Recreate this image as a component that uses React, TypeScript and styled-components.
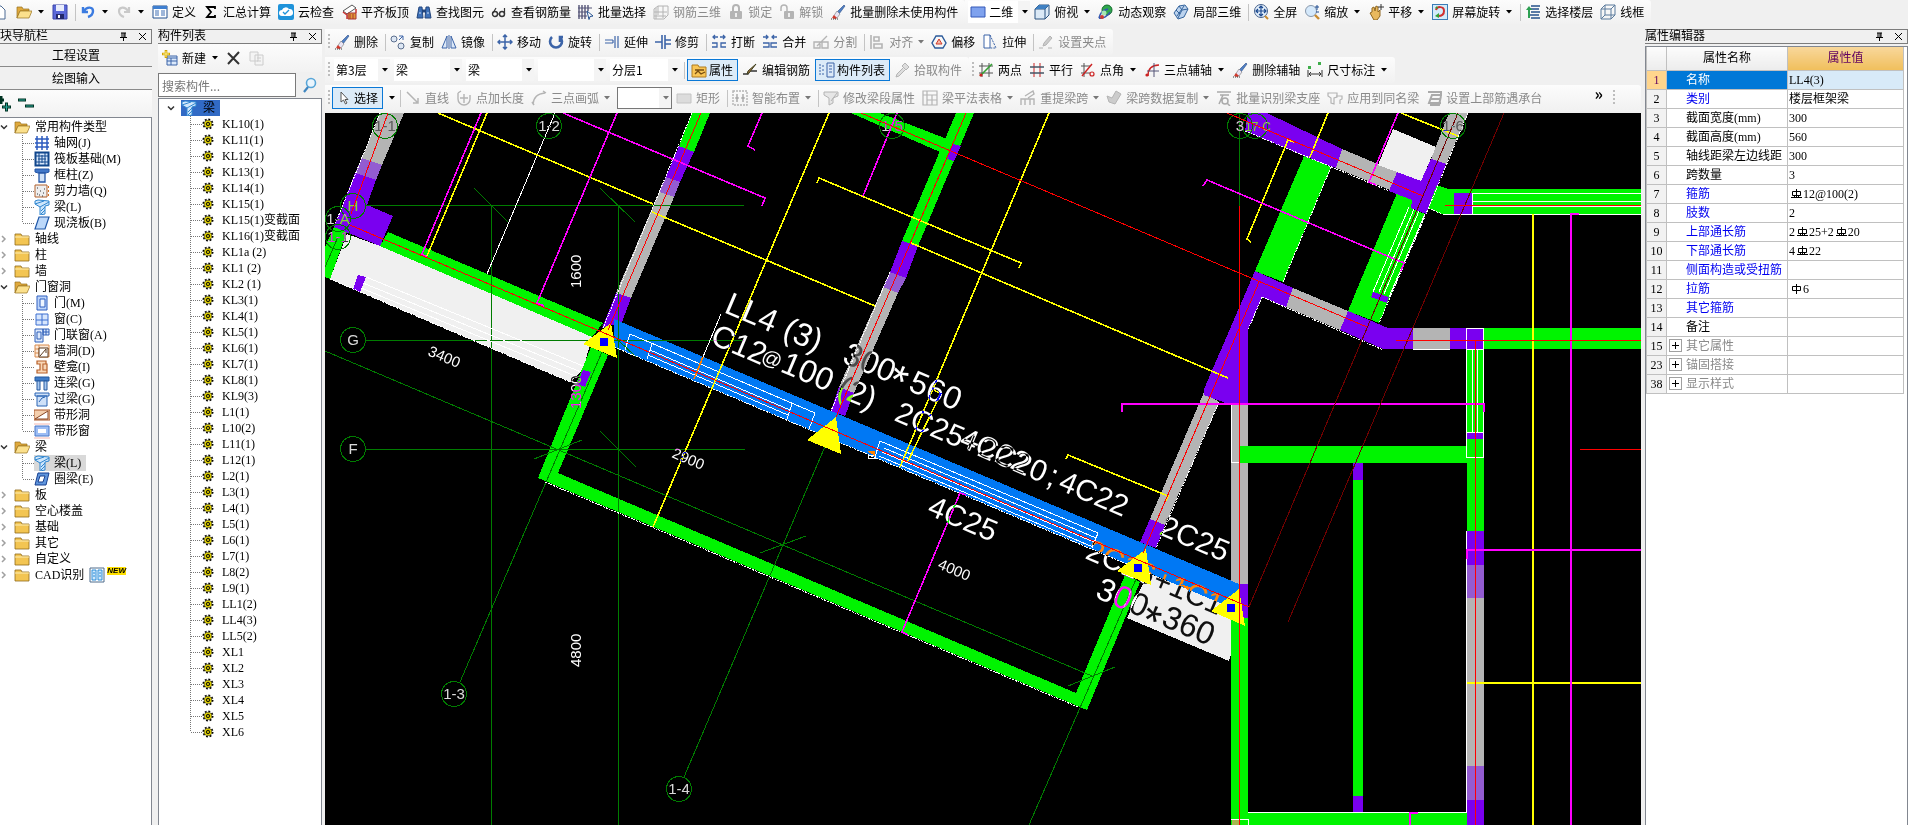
import React, { Fragment, ReactNode } from "react";
import styled, { createGlobalStyle, css } from "styled-components";

const UI = '"Noto Sans CJK SC", "Liberation Sans", sans-serif';
const SONG = '"Liberation Serif", "Noto Sans CJK SC", serif';

const Global = createGlobalStyle`
  * { box-sizing: border-box; }
  body { margin: 0; background: #f0f0f0; color: #000; font: 12px/16px ${UI}; }
  button, input, select { font: inherit; color: inherit; }
  ul { list-style: none; margin: 0; padding: 0; }
  h2 { margin: 0; font: inherit; }
  svg { display: block; flex: none; }
`;

/* ---------- page frame ---------- */
const Page = styled.div`
  display: flex;
  flex-direction: column;
  height: 100vh;
  min-height: 760px;
  overflow: hidden;
`;
const Body = styled.div`
  display: flex;
  flex: 1;
  min-height: 0;
`;
const Center = styled.main`
  display: flex;
  flex-direction: column;
  flex: 1;
  min-width: 0;
  margin: 0 4px 0 3px;
`;
const Canvas = styled.div`
  flex: 1;
  min-height: 0;
  background: #000;
  overflow: hidden;
`;

/* ---------- toolbars ---------- */
const BarRow = styled.div<{ $top?: boolean }>`
  display: flex;
  flex: none;
  height: ${(p) => (p.$top ? 29 : 28)}px;
  padding-bottom: ${(p) => (p.$top ? 5 : 2)}px;
  overflow: hidden;
`;
const Strip = styled.div<{ $grow?: boolean; $lead?: number }>`
  display: flex;
  align-items: center;
  flex: ${(p) => (p.$grow ? "1 0 auto" : "none")};
  padding: 0 0 0 ${(p) => p.$lead ?? 3}px;
  border-radius: 0 3px 3px 0;
  background: linear-gradient(#fcfcfc, #f1f1f1);
  white-space: nowrap;
`;
const Grip = styled.span`
  width: 2px;
  height: 16px;
  margin-right: 4px;
  background: repeating-linear-gradient(#bdbdbd 0 2px, transparent 2px 4px);
`;
const Split = styled.span`
  width: 1px;
  height: 17px;
  margin: 0 4px 0 0;
  background: #c4c4c4;
`;
const ToolButton = styled.button<{ $off?: boolean; $on?: boolean; $tight?: boolean }>`
  display: flex;
  align-items: center;
  gap: 4px;
  height: 22px;
  margin: 0 ${(p) => (p.$tight ? 0 : 7)}px 0 0;
  padding: 0;
  border: 0;
  background: none;
  white-space: nowrap;
  color: ${(p) => (p.$off ? "#8a8a8a" : "#000")};
  ${(p) =>
    p.$on &&
    css`
      gap: 2px;
      margin: 0 4px 0 -2px;
      padding: 0 4px 0 3px;
      border: 1px solid #0a78d6;
      background: #dcebf8;
    `}
`;
const MenuButton = styled.button`
  margin: 0 4px 0 0;
  padding: 0;
  border: 0;
  background: none;
`;
const Combo = styled.label<{ $w: number; $boxed?: boolean }>`
  display: flex;
  align-items: center;
  width: ${(p) => p.$w}px;
  height: 22px;
  margin-right: 4px;
  padding-left: 2px;
  background: #fff;
  border: ${(p) => (p.$boxed ? "1px solid #777" : "0")};
`;
const ComboSelect = styled.select<{ $inset?: boolean }>`
  appearance: none;
  flex: 1;
  min-width: 0;
  padding: 0 0 0 ${(p) => (p.$inset ? 3 : 0)}px;
  border: 0;
  background: none;
`;
const ComboArrow = styled.span`
  display: flex;
  align-items: center;
  justify-content: center;
  align-self: stretch;
  width: 12px;
  background: #f4f4f4;
`;
const More = styled.button`
  margin: 0 10px 0 auto;
  padding: 0;
  border: 0;
  background: none;
  font: 700 16px/16px ${UI};
  align-self: flex-start;
`;
const EmptyTool = styled.span`
  width: 22px;
`;

const Caret = ({ off }: { off?: boolean }) => (
  <svg width={off ? 7 : 9} height="6" viewBox={off ? "1 0 7 6" : "0 0 9 6"} aria-hidden="true">
    <path d="M2 1h6L5 4.5z" fill={off ? "#777" : "#000"} />
  </svg>
);

/* ---------- icon drawings, 16 x 16 ---------- */
const B = "#3c64a8";
const G = "#b4b4b4";
const st = (c: string, w = 1) => ({ fill: "none", stroke: c, strokeWidth: w });

const brush = (
  <>
    <path d="M14 1l1 1-6 8-2-2z" fill="#4f7fc4" stroke="#2b4d86" strokeWidth=".6" />
    <path d="M7 7l3 3-3 4-4-1z" fill="#e8e4f4" stroke="#777" strokeWidth=".6" />
    <path d="M4 11l3 3-2 1-3-1z" fill="#d2392c" />
    <path d="M1 15h7" stroke="#333" strokeDasharray="1 1" />
  </>
);
const beam = (
  <>
    <path d="M1 2l3-1 11 1v4l-4 1v8l-5 1V8L1 5z" fill="#cfe6fb" stroke="#2f86d0" />
    <path d="M1 5l9-3M6 8l9-5M7 12l4-4M7 15l4-4" stroke="#2f86d0" />
  </>
);
const openFolder = (
  <>
    <path d="M1 3h5l1 2h6v2H4l-3 7z" fill="#e0a93c" stroke="#96701c" strokeWidth=".7" />
    <path d="M4 7h12l-3 7H1z" fill="#fbe08c" stroke="#96701c" strokeWidth=".7" />
  </>
);

const icons: Record<string, ReactNode> = {
  page: <path d="M-8 2h9l4 4v9H-8z" fill="#fff" stroke="#4c6a94" />,
  open: openFolder,
  save: (
    <>
      <path d="M1 1h14v14H1z" fill="#5a68d8" stroke="#3a44a8" />
      <path d="M4 1h8v6H4z" fill="#e8ecfb" />
      <path d="M4 10h8v5H4z" fill="#23286a" />
      <path d="M6 11h2v3H6z" fill="#fff" />
    </>
  ),
  undo: <path d="M3 3v5h5M4 7c3-5 9-4 9 0 0 3-2 5-5 6" {...st("#3b7be0", 2.4)} />,
  redo: <path d="M13 3v5H8M12 7C9 2 3 3 3 7c0 3 2 5 5 6" {...st("#c9c9c9", 2.2)} />,
  define: (
    <>
      <path d="M1 2h14v12H1z" fill="#fff" stroke="#23508f" />
      <path d="M1 2h14v3H1z" fill="#3f7fd0" />
      <path d="M3 7h4M3 9h4M3 11h4M9 7h4M9 9h4M9 11h4" stroke="#3f6fb4" />
    </>
  ),
  sigma: <path d="M12 5V3H4l4 5-4 5h8v-2" {...st("#000", 1.8)} />,
  cloud: (
    <>
      <rect width="16" height="16" rx="2" fill="#1f93da" />
      <path d="M4 12a3 3 0 010-6 4 4 0 017-1 3.5 3.5 0 011 7z" fill="#fff" />
      <path d="M5 8l2 2 4-4" {...st("#1f93da", 1.3)} />
    </>
  ),
  slab: (
    <>
      <path d="M2 7l9-6 4 3-9 6z" fill="#fff" stroke="#555" />
      <path d="M2 8l4 3v4M15 5v4" {...st("#c33", 1.5)} />
      <path d="M7 9h8v6H7z" fill="#e09a36" stroke="#a33" />
      <path d="M9 10v5M12 10v5" stroke="#a33" />
    </>
  ),
  find: (
    <>
      <path d="M3 3h3l1 11H1zM10 3h3l2 11H9z" fill="#3d70b8" stroke="#23457c" />
      <path d="M6 7h4" stroke="#23457c" strokeWidth="3" />
      <path d="M3 9h2M11 9h2" stroke="#cfe0f8" />
    </>
  ),
  glasses: (
    <>
      <circle cx="4" cy="10" r="2.500" {...st("#333", 1.4)} />
      <circle cx="11" cy="10" r="2.500" {...st("#333", 1.4)} />
      <path d="M2 9l3-5M13.500 10V4M7 10h2" {...st("#333", 1.2)} />
    </>
  ),
  batch: (
    <>
      <path d="M1 1v14M4 1v14M7 1v14M10 1v6" stroke="#557" strokeWidth="1.4" />
      <path d="M0 4h14M0 8h9M0 12h9" stroke="#557" />
      <path d="M9 7l6 5-3 .5-1 3z" fill="#fff" stroke="#23508f" />
    </>
  ),
  rebar3d: <path d="M1 5l4-3h10v9l-4 4H1zM5 2v9M10 2v12M1 8h13M1 12h12M3 4v11" {...st(G)} />,
  lock: (
    <>
      <path d="M5 7V4a3 3 0 016 0v3" {...st(G, 2)} />
      <rect x="2" y="7" width="12" height="8" rx="1" fill={G} />
      <path d="M8 9v4" stroke="#eee" strokeWidth="2" />
    </>
  ),
  unlock: (
    <>
      <path d="M2 7V4a3 3 0 016 0v3" {...st(G, 1.5)} />
      <rect x="5" y="7" width="10" height="8" rx="1" fill={G} />
      <path d="M10 9v4" stroke="#eee" strokeWidth="2" />
    </>
  ),
  brush,
  plane: <path d="M1 3h14v10H1z" fill="#7fa2ee" stroke="#3558b8" />,
  cube: (
    <>
      <path d="M1 5l4-4h10v10l-4 4H1z" fill="#dbe9f6" stroke="#2b5380" />
      <path d="M1 5h10v10M11 5l4-4" {...st("#2b5380")} />
      <path d="M1 5l4-4h10l-4 4z" fill="#3f80c2" />
    </>
  ),
  orbit: (
    <>
      <ellipse cx="9" cy="6" rx="5" ry="5" fill="#2fa84e" stroke="#156b2c" />
      <path d="M1 14c1-5 5-8 9-9M1 14c4 1 9-2 11-6" {...st("#3557b0", 1.6)} />
      <circle cx="6" cy="9" r="2.5" fill="#a6e6b2" />
      <circle cx="4" cy="13" r="2" fill="#cc3a33" />
    </>
  ),
  local3d: (
    <>
      <path d="M1 9l5-7 6-1 3 4-4 8-6 2z" fill="#bcd3ee" stroke="#33639c" />
      <path d="M6 2l3 4 6-1M9 6l-4 8M3 6l4 4M4 12l7-10" {...st("#33639c")} />
    </>
  ),
  full: (
    <>
      <circle cx="8" cy="7" r="6.5" fill="#e4f0fc" stroke="#44618c" />
      <path d="M8 2v10M3 7h10M6 4l2-2 2 2M6 10l2 2 2-2M5 5L3 7l2 2M11 5l2 2-2 2" {...st("#1d4a90", 1.2)} />
      <path d="M12 12l3 3" stroke="#c98b2f" strokeWidth="2" />
    </>
  ),
  zoom: (
    <>
      <circle cx="7" cy="7" r="5.5" fill="#d5e9fb" stroke="#8898ac" />
      <path d="M11 11l4 4" stroke="#c98b2f" strokeWidth="2.4" />
      <path d="M13 1v5M11 3h4M12 8h3" stroke="#1d4a90" />
    </>
  ),
  pan: (
    <>
      <path d="M2 9l2-1V4l2-1 1 4 1-5 2 1v5l2-2v6l-3 4H6z" fill="#e9b95e" stroke="#8f6720" />
      <path d="M13 0v6M10 3h6" stroke="#333" />
    </>
  ),
  spin: (
    <>
      <rect x=".5" y=".5" width="15" height="15" fill="#d3ecfb" stroke="#3b7cb6" />
      <path d="M4 6c1-4 8-4 8 1 0 4-3 5-6 5" {...st("#d03030", 2)} />
      <path d="M3 12l4-3v5z" fill="#35a035" />
      <path d="M3 4l2-2 1 3" fill="#35a035" />
    </>
  ),
  floors: (
    <>
      <path d="M6 2h9M5 5h9M6 8h9M5 11h9M6 14h9" stroke="#24508a" strokeWidth="1.6" />
      <path d="M1 6l3-4 3 4H5v8H3V6z" fill="#2da052" />
    </>
  ),
  wire: <path d="M1 5l4-4h10v10l-4 4H1zM1 5h10v10M11 5l4-4M5 1v10l-4 4M5 11h10" {...st("#5b7a9c")} />,
  copy: (
    <>
      <circle cx="4" cy="5" r="3" fill="#dde7f4" stroke="#5c6f8e" />
      <circle cx="11" cy="12" r="3" fill="#dde7f4" stroke="#5c6f8e" />
      <path d="M9 2h4v4M9 6l4-4" {...st(B)} />
    </>
  ),
  mirror: (
    <>
      <path d="M1 14L6 2v12zM15 14L10 2v12z" fill="#dce8f7" stroke={B} />
      <path d="M8 1v14" stroke={B} />
    </>
  ),
  move: <path d="M8 1v14M1 8h14M6 3l2-2 2 2M6 13l2 2 2-2M3 6L1 8l2 2M13 6l2 2-2 2" {...st(B, 1.5)} />,
  rotate: <path d="M4 3a6 6 0 108 0M12 8V3h3" {...st(B, 2.6)} />,
  extend: <path d="M1 6h8M1 9h8M11 2v12M14 2v12M9 6v3" {...st(B, 1.2)} />,
  trim: <path d="M7 1v14M10 1v14M0 8h7M10 6h6M10 10h6" {...st(B, 1.6)} />,
  cut: <path d="M2 3h5M9 3h5M4 1L2 3l2 2M12 1l2 2-2 2M1 9h5v4H1M15 9h-5v4h5" {...st(B, 1.3)} />,
  join: <path d="M1 3h5M10 3h5M4 1l2 2-2 2M12 1l-2 2 2 2M1 9h6v4H1M15 9H9v4h6" {...st(B, 1.3)} />,
  divide: <path d="M1 8h6v6H1zM9 8h6v6H9zM4 12L14 2" {...st(G, 1.4)} />,
  align: <path d="M2 1v14M5 3h5v4H5zM5 10h8v4H5z" {...st(G, 1.6)} />,
  offset: (
    <>
      <path d="M5 2h6l4 7-3 5H4L1 9z" {...st("#2b5a9a", 1.4)} />
      <path d="M8 5l3 5H5z" fill="#f5b8a8" stroke="#d03a2a" />
    </>
  ),
  stretch: (
    <>
      <path d="M2 1h6v13H2z" fill="#fff" stroke={B} />
      <path d="M8 1l6 13H8" fill="none" stroke={B} strokeDasharray="2 1" />
    </>
  ),
  clamp: <path d="M12 2l2 2-6 7-3 1 1-3zM1 14h4M10 14h4" fill="#ccc" stroke={G} />,
  attr: (
    <>
      <path d="M1 3h6l1 2h7v10H1z" fill="#f9c656" stroke="#b07d20" />
      <path d="M4 8h9M4 12l3-3 3 3 4-2" {...st("#774e10", 1.3)} />
    </>
  ),
  editBar: (
    <>
      <path d="M1 12h5l2-3h7" {...st("#333", 1.3)} />
      <path d="M14 2l-7 9-2 1 1-3z" fill="#9a6d3a" stroke="#442" />
    </>
  ),
  listBtn: (
    <>
      <path d="M1 2v12M3 4h2M3 8h2M3 12h2" stroke={B} strokeDasharray="2 1" />
      <path d="M8 1h7v14H8z" fill="#dce9f8" stroke={B} />
      <path d="M10 4h3M10 7h3M10 10h3" stroke={B} />
    </>
  ),
  pick: <path d="M11 1l4 4-3 3-4-4zM9 6l-6 6-1 3 3-1 6-6" fill="#ddd" stroke={G} />,
  twoPt: (
    <>
      <path d="M4 1v14M11 1v14M1 4h14M1 11h14" stroke="#555" />
      <path d="M2 14L14 2" stroke="#35a035" strokeWidth="1.6" />
      <circle cx="3" cy="13" r="1.6" fill="#c22" />
    </>
  ),
  parallel: (
    <>
      <path d="M5 1v14M11 1v14" stroke="#c22" />
      <path d="M1 5h14M1 11h14" stroke="#456" strokeWidth="1.4" />
    </>
  ),
  angle: (
    <>
      <path d="M4 1v14M1 4h9M1 11h9" stroke="#555" />
      <path d="M2 14L12 2" stroke="#c22" strokeWidth="1.4" />
      <circle cx="12" cy="12" r="2" {...st("#c22", 1.2)} />
    </>
  ),
  arcAxis: (
    <>
      <path d="M15 3C8 3 4 7 4 14" {...st("#c22", 1.4)} />
      <path d="M10 1v14M3 9h12" stroke="#557" />
      <circle cx="3" cy="13" r="1.6" fill="#c22" />
    </>
  ),
  dim: (
    <>
      <path d="M1 8v7M15 8v7M2 12h12M4 10l-2 2 2 2M12 10l2 2-2 2" {...st("#333")} />
      <path d="M1 4h3v3H1zM11 0h3v3h-3z" fill="#3fae4b" />
    </>
  ),
  pointer: <path d="M5 2v10l2.500-2 2 4 1.500-1-2-3.500h3z" fill="#fff" stroke="#555" />,
  line: <path d="M2 2l11 11M13 8v5H8" {...st(G, 1.5)} />,
  plusArc: <path d="M2 3v6a6 6 0 0012 0V5M8 4v9M4 8h8M2 3l3-2" {...st(G, 1.4)} />,
  arc3: <path d="M2 14C3 7 6 4 14 3M1 12l2 3M12 1l3 2" {...st(G, 1.5)} />,
  rect: <path d="M1 4h14v9H1z" fill="#dcdcdc" stroke="#c4c4c4" />,
  smart: (
    <>
      <path d="M1 1h14v14H1z" fill="none" stroke={G} strokeWidth="1.4" strokeDasharray="2 1" />
      <path d="M5 4v8M11 4v8M3 8h4M9 8h4" {...st("#999", 1.2)} />
    </>
  ),
  modify: <path d="M1 2h14v4l-5 2v5l-4 2V8L1 5zM8 11l6-8" fill="#e6e6e6" stroke={G} />,
  table: <path d="M1 1h14v14H1zM1 5h14M5 1v14M5 10h10M10 5v10" {...st(G, 1.2)} />,
  span: <path d="M1 15V9h13v6M5 9v6M10 9v6M5 6l8-5 1 3-6 4" {...st(G, 1.4)} />,
  paint: <path d="M10 1l5 3-6 10-6-2-2-6 5 2z" fill="#ccc" stroke={G} />,
  detect: <path d="M1 2h14M4 5h9M7 5l-4 9M9 8a3 3 0 100 6 3 3 0 000-6zM11 13l3 3" {...st("#aaa", 1.5)} />,
  apply: <path d="M1 3h9v4L7 8v6l-3-1V8L1 6zM9 6h6v3l-2 1v4" {...st(G, 1.2)} />,
  cap: <path d="M2 2h13v3H6l-3 8h12M5 9h9M4 15h9l2-9" {...st("#aaa", 2)} />,
  create: (
    <>
      <path d="M5 6h10v9H5z" fill="#dbe9fb" stroke={B} />
      <path d="M5 8h10M9 8v7M5 11h10" stroke={B} />
      <path d="M4 0v8M0 4h8" stroke="#d3a300" strokeWidth="2.6" />
      <path d="M4 1v6M1 4h6" stroke="#fff08a" />
    </>
  ),
  cross: <path d="M2 3l11 11M13 2L2 14" {...st("#333", 2)} />,
  paste: <path d="M1 2h8v9H1zM6 5h8v10H6zM8 8h4M8 11h4" fill="#f4f4f4" stroke="#ccc" />,
  search: (
    <>
      <circle cx="9" cy="6" r="4.500" fill="#eaf5fd" stroke="#58a6d8" strokeWidth="1.6" />
      <path d="M6 10l-4 5" stroke="#3f86c0" strokeWidth="2.2" />
    </>
  ),
  folder: (
    <>
      <path d="M1 3h6l1 2h7v9H1z" fill="#f3c552" stroke="#8f6a1a" strokeWidth=".8" />
      <path d="M1 6h14" stroke="#fdeeb4" />
    </>
  ),
  folderOpen: openFolder,
  grid: <path d="M3 1v14M8 1v14M13 1v14M1 4h14M1 8h14M1 12h14" {...st("#2c5bc0", 1.5)} />,
  raft: (
    <>
      <path d="M1.500 1.500h13v13h-13z" fill="#d6e6fa" stroke="#10468c" strokeWidth="2" />
      <path d="M5 2v12M8 4v8M11 2v12M2 5h12M4 8h8M2 11h12" stroke="#10468c" />
    </>
  ),
  column: (
    <>
      <path d="M1 2h14v3l-3 1H4L1 5z" fill="#3f76c8" stroke="#2456a6" />
      <path d="M5 6h6v9H5z" fill="#cfe1f8" stroke="#2456a6" strokeWidth="1.300" />
    </>
  ),
  wall: (
    <>
      <path d="M1 2h12v12H1z" fill="#eee" stroke="#b0602c" />
      <path d="M3 11h1M6 8h1M5 12h1M9 10h1M8 13h1M10 6h1M3 5h1" stroke="#333" />
      <path d="M14 4h1M14 8h1M14 12h1" stroke="#d07024" strokeWidth="2" />
    </>
  ),
  beam,
  floorSlab: <path d="M5 2h10l-4 12H1z" fill="#bcd8fa" stroke="#1d56a8" strokeWidth="1.2" />,
  door: (
    <>
      <path d="M3 1h10v14H3z" fill="#bcd4fa" stroke="#2f5fc0" />
      <path d="M6 4h5v8H6z" fill="#eef5ff" stroke="#2f5fc0" />
    </>
  ),
  window: (
    <>
      <path d="M2 3h12v11H2z" fill="#d7e6fd" stroke="#3c6fd0" />
      <path d="M8 3v11M2 9h12" stroke="#3c6fd0" />
    </>
  ),
  doorWin: <path d="M1 2h8v13H1zM3 5h4v7H3zM9 2h6v6H9zM12 2v6M9 5h6" fill="#dbe8fc" stroke="#2f5fb8" />,
  hole: (
    <>
      <path d="M1 2h14v12H1zM1 6h14M1 10h14M5 2v12" fill="#fbeadb" stroke="#d88a4c" />
      <path d="M5 5h9v9H5zM6 13l6-7M12 6v4" fill="#fff" stroke="#5a3a20" />
    </>
  ),
  niche: <path d="M3 2h9v3H9v6h4v3H3v-3h3V5H3zM10 5h3v6h-3" fill="#f8d6b6" stroke="#b8602a" strokeWidth="1.2" />,
  linkBeam: (
    <>
      <path d="M1 2h14v4H1z" fill="#3f7cc8" stroke="#24589e" />
      <path d="M3 6h3v9H3zM10 6h3v9h-3z" fill="#a8c8f0" stroke="#24589e" />
    </>
  ),
  overBeam: <path d="M1 2h14v3H1zM3 5h10v10H3zM5 11l3-4 3-1" fill="#cfe1f8" stroke="#2a65b4" />,
  stripHole: (
    <>
      <path d="M0 3h16v10H0z" fill="#f4cfae" stroke="#a8562a" />
      <path d="M1 12l13-8v8z" fill="#fff" stroke="#884422" />
    </>
  ),
  stripWin: (
    <>
      <path d="M0 1h16M0 15h16" stroke="#f6b8b0" />
      <path d="M1 3h14v10H1z" fill="#9dbdf4" stroke="#4a78c8" />
      <path d="M4 6h8v4H4z" fill="#fff" />
    </>
  ),
  ringBeam: (
    <>
      <path d="M4 2h11l-3 12H1z" fill="#5f95dc" stroke="#173f90" />
      <path d="M6 5h5l-2 6H4z" fill="#fff" stroke="#173f90" />
    </>
  ),
  doc: (
    <>
      <path d="M1 1h14v14H1z" fill="#fff" stroke="#4e6d8c" />
      <path d="M3 3h4v10H3zM9 3h4v10H9z" fill="#cfe8fb" stroke="#2b8cd8" />
      <path d="M4 6h2M4 9h2M10 6h2M10 9h2" stroke="#2b8cd8" />
    </>
  ),
};

const Icon = ({ name, size = 16 }: { name: string; size?: number }) => (
  <svg width={size} height={size} viewBox="0 0 16 16" aria-hidden="true">
    {icons[name]}
  </svg>
);

type ToolSpec = { i: string; t?: string; off?: boolean; on?: boolean; menu?: boolean; tight?: boolean; name?: string };
const Tool = ({ i, t, off, on, menu, tight, name }: ToolSpec) => (
  <ToolButton type="button" $off={off} $on={on} $tight={tight} aria-label={t ?? name}>
    <Icon name={i} />
    {t}
    {menu && <Caret off={off} />}
  </ToolButton>
);
const Tools = ({ items }: { items: (ToolSpec | "|")[] }) => (
  <>{items.map((s, n) => (s === "|" ? <Split key={n} /> : <Tool key={n} {...s} />))}</>
);
const Picker = ({ w, value, name, boxed, icon }: { w: number; value: string; name: string; boxed?: boolean; icon?: string }) => (
  <Combo $w={w} $boxed={boxed}>
    {icon && <Icon name={icon} />}
    <ComboSelect $inset={!!icon} aria-label={name} defaultValue={value}>
      <option value={value}>{value}</option>
    </ComboSelect>
    <ComboArrow>
      <Caret off={boxed} />
    </ComboArrow>
  </Combo>
);

/* ---------- docked panels ---------- */
const Panel = styled.section<{ $w: number; $gap?: number }>`
  display: flex;
  flex-direction: column;
  flex: none;
  width: ${(p) => p.$w}px;
  margin-right: ${(p) => p.$gap ?? 0}px;
  min-height: 0;
  font-family: ${SONG};
`;
const PanelHead = styled.header`
  display: flex;
  align-items: center;
  gap: 10px;
  height: 15px;
  flex: none;
  padding-right: 4px;
  border: 1px solid #7c7c7c;
  border-left: 0;
  line-height: 13px;
`;
const PanelTitle = styled.h2`
  flex: 1;
`;
const HeadButton = styled.button`
  padding: 0;
  border: 0;
  background: none;
`;
const Title = ({ children }: { children: string }) => (
  <PanelHead>
    <PanelTitle>{children}</PanelTitle>
    <HeadButton type="button" aria-label="固定">
      <svg width="9" height="9" viewBox="0 0 9 9">
        <path d="M2 1h5M3 1v4M6 1v4M5 1v4M1 5.500h7M4.500 6v3" {...st("#000")} />
      </svg>
    </HeadButton>
    <HeadButton type="button" aria-label="关闭">
      <svg width="9" height="9" viewBox="0 0 9 9">
        <path d="M1 1l7 7M8 1L1 8" {...st("#000")} />
      </svg>
    </HeadButton>
  </PanelHead>
);
const NavButton = styled.button`
  flex: none;
  height: 22px;
  margin-top: 1px;
  padding: 0;
  border: 0;
  border-bottom: 1px solid #8a8a8a;
  background: #f0f0f0;
  text-align: center;
`;
const PanelTools = styled.div<{ $h: number }>`
  display: flex;
  align-items: center;
  flex: none;
  height: ${(p) => p.$h}px;
  background: linear-gradient(#fcfcfc, #f2f2f2);
  font-family: ${UI};
`;
const ListTools = styled(PanelTools)`
  padding: 0 0 0 4px;
`;
const SearchRow = styled.div`
  display: flex;
  flex: none;
  height: 26px;
  align-items: center;
  gap: 6px;
`;
const SearchBox = styled.input`
  width: 138px;
  height: 24px;
  padding: 0 3px;
  border: 1px solid #7a7a7a;
  background: #fff;
  font-family: ${UI};
  &::placeholder { color: #777; opacity: 1; }
`;
const TreeBox = styled.div<{ $left?: boolean }>`
  flex: 1;
  min-height: 0;
  padding-top: 1px;
  overflow: hidden;
  background: #fff;
  border: 1px solid #828790;
  border-bottom: 0;
  border-left-width: ${(p) => (p.$left ? 1 : 0)}px;
`;
const Row = styled.div<{ $pad?: number }>`
  display: flex;
  align-items: center;
  height: 16px;
  padding-left: ${(p) => p.$pad ?? 0}px;
  white-space: pre;
`;
const RowText = styled.span<{ $gap?: number }>`
  padding-left: ${(p) => p.$gap ?? 5}px;
`;
const Picked = styled.span<{ $bg: string }>`
  display: flex;
  align-items: center;
  height: 16px;
  padding: 0 5px 0 0;
  background: ${(p) => p.$bg};
`;
const NewTag = styled.span`
  align-self: flex-start;
  margin-left: 2px;
  background: #ffe000;
  font: italic 700 8px/8px "Liberation Sans", sans-serif;
`;

const Chevron = ({ open }: { open?: boolean }) => (
  <svg width="8" height="8" viewBox="0 0 8 8" aria-hidden="true">
    <path d={open ? "M1 2.500l3 3 3-3" : "M2 1l3 3-3 3"} {...st(open ? "#333" : "#a0a0a0", 1.5)} />
  </svg>
);
const Branch = ({ last }: { last?: boolean }) => (
  <svg width="12" height="16" viewBox="0 0 12 16" aria-hidden="true">
    <path d={`M.5 0v${last ? 8 : 16}M1 8.500h11`} stroke="#777" strokeDasharray="1 1" fill="none" />
  </svg>
);
const Gear = () => (
  <svg width="12" height="12" viewBox="0 0 12 12" aria-hidden="true">
    <circle cx="6" cy="6" r="4.500" fill="none" stroke="#000" strokeWidth="2" strokeDasharray="1.800 1.700" />
    <circle cx="6" cy="6" r="3.800" fill="#ffee00" stroke="#333" strokeWidth=".6" />
    <path d="M6 2.500v7M2.500 6h7M3.500 3.500l5 5M8.500 3.500l-5 5" stroke="#6a6200" strokeWidth=".6" />
    <circle cx="6" cy="6" r="1.500" fill="#ffee00" stroke="#000" />
  </svg>
);

type Node = { t: string; kids?: [string, string][]; sel?: number; tag?: boolean };
const nav: Node[] = [
  {
    t: "常用构件类型",
    kids: [["grid", "轴网(J)"], ["raft", "筏板基础(M)"], ["column", "框柱(Z)"], ["wall", "剪力墙(Q)"], ["beam", "梁(L)"], ["floorSlab", "现浇板(B)"]],
  },
  { t: "轴线" },
  { t: "柱" },
  { t: "墙" },
  {
    t: "门窗洞",
    kids: [["door", "门(M)"], ["window", "窗(C)"], ["doorWin", "门联窗(A)"], ["hole", "墙洞(D)"], ["niche", "壁龛(I)"], ["linkBeam", "连梁(G)"], ["overBeam", "过梁(G)"], ["stripHole", "带形洞"], ["stripWin", "带形窗"]],
  },
  { t: "梁", sel: 0, kids: [["beam", "梁(L)"], ["ringBeam", "圈梁(E)"]] },
  { t: "板" },
  { t: "空心楼盖" },
  { t: "基础" },
  { t: "其它" },
  { t: "自定义" },
  { t: "CAD识别", tag: true },
];
const parts = (
  "KL10(1),KL11(1),KL12(1),KL13(1),KL14(1),KL15(1),KL15(1)变截面,KL16(1)变截面,KL1a (2),KL1 (2),KL2 (1)," +
  "KL3(1),KL4(1),KL5(1),KL6(1),KL7(1),KL8(1),KL9(3),L1(1),L10(2),L11(1),L12(1),L2(1),L3(1),L4(1),L5(1)," +
  "L6(1),L7(1),L8(2),L9(1),LL1(2),LL4(3),LL5(2),XL1,XL2,XL3,XL4,XL5,XL6"
).split(",");

const NavPanel = () => (
  <Panel $w={152} $gap={6} aria-label="模块导航栏">
    <Title>块导航栏</Title>
    <NavButton type="button">工程设置</NavButton>
    <NavButton type="button">绘图输入</NavButton>
    <PanelTools $h={27}>
      <svg width="34" height="16" viewBox="0 0 34 16" aria-hidden="true">
        <path d="M-3 4h7M1 0v8M2 11h9M6.500 6.500v9M18 4h8M25 10h9" stroke="#032" strokeWidth="3" />
        <path d="M3 11h7M6.500 7.500v7M19 4h6M26 10h7" stroke="#2aa89a" />
      </svg>
    </PanelTools>
    <TreeBox>
      <ul>
        {nav.map((n) => (
          <li key={n.t}>
            <Row>
              <Chevron open={!!n.kids} />
              <Row $pad={6}>
                <Icon name={n.kids ? "folderOpen" : "folder"} />
                <RowText>{n.t}</RowText>
              </Row>
              {n.tag && (
                <Row $pad={5}>
                  <Icon name="doc" />
                  <NewTag>NEW</NewTag>
                </Row>
              )}
            </Row>
            {n.kids && (
              <ul>
                {n.kids.map(([icon, label], k) => (
                  <li key={label}>
                    <Row $pad={22}>
                      <Branch last={k === n.kids!.length - 1} />
                      <Picked $bg={n.sel === k ? "#d9d9d9" : "transparent"}>
                        <Icon name={icon} />
                        <RowText $gap={4}>{label}</RowText>
                      </Picked>
                    </Row>
                  </li>
                ))}
              </ul>
            )}
          </li>
        ))}
      </ul>
    </TreeBox>
  </Panel>
);

const PartPanel = () => (
  <Panel $w={164} aria-label="构件列表">
    <Title>构件列表</Title>
    <ListTools $h={28}>
      <Tool i="create" t="新建" menu />
      <Tool i="cross" name="删除构件" />
      <Tool i="paste" name="复制构件" off />
    </ListTools>
    <SearchRow>
      <SearchBox aria-label="搜索构件" placeholder="搜索构件..." />
      <Icon name="search" />
    </SearchRow>
    <TreeBox $left>
      <Row $pad={8}>
        <Chevron open />
        <Row $pad={6}>
          <Picked $bg="#316ac5">
            <Icon name="beam" />
            <RowText $gap={6}>梁</RowText>
          </Picked>
        </Row>
      </Row>
      <ul>
        {parts.map((p, k) => (
          <li key={p}>
            <Row $pad={31}>
              <Branch last={k === parts.length - 1} />
              <Gear />
              <RowText $gap={8}>{p}</RowText>
            </Row>
          </li>
        ))}
      </ul>
    </TreeBox>
  </Panel>
);

/* ---------- property grid ---------- */
const GridBox = styled.div`
  flex: 1;
  min-height: 0;
  margin-top: 2px;
  padding: 0 3px 0 0;
  border: 1px solid #828790;
  border-bottom: 0;
  background: #fff;
`;
const Grid = styled.table`
  width: 100%;
  table-layout: fixed;
  border-collapse: collapse;
`;
const Col = styled.col<{ $w?: number }>`
  width: ${(p) => (p.$w ? `${p.$w}px` : "auto")};
`;
const Th = styled.th<{ $hot?: boolean }>`
  height: 23px;
  padding: 0;
  border: 1px solid #c0c0c0;
  border-top: 0;
  font-weight: 400;
  color: ${(p) => (p.$hot ? "#600060" : "#000")};
  background: ${(p) => (p.$hot ? "linear-gradient(#f8d79b, #f0bf5c)" : "linear-gradient(#fcfcfc, #ececec)")};
`;
const Num = styled.td<{ $hot?: boolean }>`
  height: 19px;
  padding: 0;
  border: 1px solid #c0c0c0;
  text-align: center;
  color: ${(p) => (p.$hot ? "#600060" : "#000")};
  background: ${(p) => (p.$hot ? "#ffd58d" : "#f2f2f2")};
`;
const NameCell = styled.td<{ $tone?: string; $hot?: boolean }>`
  height: 19px;
  padding: 0 0 0 2px;
  border: 1px solid #c0c0c0;
  white-space: nowrap;
  overflow: hidden;
  color: ${(p) => (p.$hot ? "#fff" : p.$tone)};
  background: ${(p) => (p.$hot ? "#0078d7" : "#fff")};
`;
const NameInner = styled.span`
  display: grid;
  grid-template-columns: 17px 1fr;
  align-items: center;
  line-height: 16px;
`;
const ValueCell = styled.td<{ $hot?: boolean }>`
  height: 19px;
  padding: 0 0 0 1px;
  border: 1px solid #c0c0c0;
  background: ${(p) => (p.$hot ? "#d8eaf8" : "#fff")};
`;
const ValueInner = styled.span`
  display: flex;
  align-items: center;
  line-height: 16px;
`;
const Expand = styled.button`
  width: 13px;
  height: 13px;
  padding: 1px;
  border: 1px solid #a0a0a0;
  background: #fff;
`;

const Steel = ({ grade }: { grade: number }) => (
  <svg width="14" height="10" viewBox="0 0 14 10" role="img" aria-label={grade === 3 ? "三级钢" : "一级钢"}>
    <path
      d={grade === 3 ? "M3.500 2.500h8v4h-8zM7.500 0v9M2 8.500h11M5.500 6v2.500M9.500 6v2.500" : "M3.500 2.500h8v4h-8zM7.500 0v10"}
      {...st("#000")}
    />
  </svg>
);
const BLUE = "#0000f0";
const GREY = "#8a8a8a";
const props: [number, string, string, (string | number)[]][] = [
  [1, "名称", BLUE, ["LL4(3)"]],
  [2, "类别", BLUE, ["楼层框架梁"]],
  [3, "截面宽度(mm)", "#000", ["300"]],
  [4, "截面高度(mm)", "#000", ["560"]],
  [5, "轴线距梁左边线距", "#000", ["300"]],
  [6, "跨数量", "#000", ["3"]],
  [7, "箍筋", BLUE, [3, "12@100(2)"]],
  [8, "肢数", BLUE, ["2"]],
  [9, "上部通长筋", BLUE, ["2", 3, "25+2", 3, "20"]],
  [10, "下部通长筋", BLUE, ["4", 3, "22"]],
  [11, "侧面构造或受扭筋", BLUE, []],
  [12, "拉筋", BLUE, [1, "6"]],
  [13, "其它箍筋", BLUE, []],
  [14, "备注", "#000", []],
  [15, "其它属性", GREY, []],
  [23, "锚固搭接", GREY, []],
  [38, "显示样式", GREY, []],
];

const PropertyPanel = () => (
  <Panel $w={263} aria-label="属性编辑器">
    <Title>属性编辑器</Title>
    <GridBox>
      <Grid>
        <colgroup>
          <Col $w={20} />
          <Col $w={121} />
          <Col />
        </colgroup>
        <thead>
          <tr>
            <Th aria-label="序号" />
            <Th>属性名称</Th>
            <Th $hot>属性值</Th>
          </tr>
        </thead>
        <tbody>
          {props.map(([n, name, tone, value]) => (
            <tr key={n}>
              <Num $hot={n === 1}>{n}</Num>
              <NameCell $tone={tone} $hot={n === 1}>
                <NameInner>
                  <span>
                    {n > 14 && (
                      <Expand type="button" aria-label={`展开${name}`}>
                        <svg width="9" height="9" viewBox="0 0 9 9">
                          <path d="M1 4.500h7M4.500 1v7" stroke="#000" />
                        </svg>
                      </Expand>
                    )}
                  </span>
                  <span>{name}</span>
                </NameInner>
              </NameCell>
              <ValueCell $hot={n === 1}>
                <ValueInner>
                  {value.map((v, k) => (typeof v === "number" ? <Steel key={k} grade={v} /> : <Fragment key={k}>{v}</Fragment>))}
                </ValueInner>
              </ValueCell>
            </tr>
          ))}
        </tbody>
      </Grid>
    </GridBox>
  </Panel>
);

/* ---------- structural plan ---------- */
const GREEN = "#00f400";
const PURPLE = "#7a00f0";
const LILAC = "#935cd1";
const CONC = "#b4b4b4";
const WHITE = "#f0f0f0";
const DARK = "#007c00";
const YEL = "#ffff00";
const MAG = "#ff00ff";
const MAROON = "#700000";

const Drawing = styled.svg`
  width: 100%;
  height: 100%;
`;
const Notes = styled.g`
  font-family: "Liberation Sans", sans-serif;
  fill: #fff;
  mix-blend-mode: difference;
`;

const walls: [string, string][] = [
  [WHITE, "347,234 380,246 592,337 583,370 570,382 330,279"],
  [CONC, "380,113 404,113 382,165 362,158"],
  [LILAC, "362,158 382,165 376,180 355,173"],
  [GREEN, "388,232 603,323 592,337 380,246"],
  [GREEN, "334,227 347,232 330,279 325,277 325,247"],
  [PURPLE, "355,173 376,180 367,205 393,216 380,246 334,227"],
  [PURPLE, "358,275 366,277 360,292 353,289"],
  [GREEN, "692,113 710,113 694,152 679,146"],
  [PURPLE, "679,146 694,152 680,182 666,177"],
  [LILAC, "666,177 680,182 674,197 659,192"],
  [CONC, "659,192 674,197 631,298 616,293"],
  [PURPLE, "616,293 631,298 622,322 602,328"],
  [GREEN, "591,347 538,478 1087,710 1140,582 1125,575 1076,693 558,473 608,355"],
  [PURPLE, "583,370 591,372 585,387 577,384"],
  [GREEN, "851,113 880,113 947,139 940,152"],
  [GREEN, "956,113 974,113 918,246 902,241"],
  [PURPLE, "953,144 961,146 954,161 947,159"],
  [PURPLE, "902,241 918,246 906,278 890,272"],
  [LILAC, "890,272 906,278 898,293 883,287"],
  [CONC, "883,287 898,293 854,393 839,387"],
  [PURPLE, "839,387 854,393 845,416 831,411"],
  [CONC, "1204,392 1219,402 1165,525 1150,519"],
  [PURPLE, "1150,519 1165,525 1156,548 1140,542"],
  [WHITE, "1148,573 1231,607 1231,655 1229,661 1127,618"],
  [CONC, "1231,405 1248,405 1248,584 1231,584"],
  [PURPLE, "1231,584 1248,584 1248,618 1231,618"],
  [GREEN, "1231,618 1248,618 1248,825 1231,825"],
  ["#0078f4", "614,319 1239,584 1239,611 1220,603 614,347"],
  [GREEN, "1304,156 1331,167 1283,282 1255,271"],
  [GREEN, "1397,193 1412,200 1411,208 1425,214 1379,323 1348,311"],
  [PURPLE, "1373,292 1389,297 1387,303 1371,297"],
  [PURPLE, "1255,271 1293,288 1286,307 1262,297 1248,330 1248,405 1231,405 1204,395 1204,389"],
  [CONC, "1293,288 1348,311 1340,330 1286,307"],
  [PURPLE, "1348,311 1388,328 1413,328 1413,349 1383,349 1340,330"],
  [CONC, "1413,328 1450,328 1450,349 1413,349"],
  [PURPLE, "1450,328 1484,328 1484,349 1450,349"],
  [GREEN, "1484,328 1641,328 1641,349 1484,349"],
  [PURPLE, "1248,113 1267,113 1342,149 1336,168 1304,156 1245,131"],
  [CONC, "1342,149 1397,172 1390,190 1336,168"],
  [WHITE, "1393,129 1436,147 1421,181 1397,172 1378,165"],
  [CONC, "1449,113 1468,113 1446,164 1431,159"],
  [PURPLE, "1397,172 1421,181 1431,159 1446,164 1426,214 1411,208 1412,200 1389,191"],
  [GREEN, "1437,185 1448,189 1641,189 1641,214 1442,214 1428,208"],
  [PURPLE, "1454,193 1472,193 1472,214 1454,214"],
  [GREEN, "1240,446 1467,446 1467,463 1240,463"],
  [CONC, "1231,463 1240,463 1240,446 1231,446"],
  [GREEN, "1467,349 1484,349 1484,531 1467,531"],
  [PURPLE, "1467,433 1484,433 1484,439 1467,439"],
  [PURPLE, "1467,531 1484,531 1484,565 1467,565"],
  [LILAC, "1467,565 1484,565 1484,598 1467,598"],
  [CONC, "1467,598 1484,598 1484,766 1467,766"],
  [LILAC, "1467,766 1484,766 1484,800 1467,800"],
  [PURPLE, "1467,800 1484,800 1484,825 1467,825"],
  [PURPLE, "1353,463 1363,463 1363,480 1353,480"],
  [GREEN, "1353,480 1363,480 1363,796 1353,796"],
  [PURPLE, "1353,796 1363,796 1363,813 1353,813"],
  [GREEN, "1248,813 1467,813 1467,825 1248,825"],
];

const outlines =
  "M366 277L583 366M363 283L581 372M361 288L580 378M630 334L815 413L809 429M630 334L625 350M652 344L647 359M792 404L787 419" +
  "M650 350L790 410M648 355L788 415M880 441L1098 533L1092 548M880 441L875 457M884 448L1096 538M882 452L1094 542M879 456L1093 547" +
  "M721 314L703 357M1409 207L1373 292M1414 209L1379 292M1419 211L1384 294M1425 214L1389 297" +
  "M1641 193.500H1472V214M1472 201.500H1641M1472 206.500H1641M1443 214.500H1641M1466.500 328V457.500H1483.500V328.500H1466M1467 349.500H1484M1472.500 349V432.500M1477.500 349V432.500M1467 432.500H1484" +
  "M1231.500 405V462.500H1240M1413 349.500H1450M1466.500 531V812.500H1248M1231 819.500H1248V825M555 113L487 274M868 455H875V458H868z";
const edges =
  "M380 113L334 227M545 482L1078 707M614 347L1148 573M692 113L603 328M890 272L831 411M1219 402L1156 548M1331 167L1283 282" +
  "M1245 131L1389 191M1262 297L1383 350M1262 297L1248 330M1468 113L1426 214L1379 323M330 279L570 382M1428 208L1442 214";
const yellow =
  "M487 113L427 256M438 113L653 204M652 212L875 306M829 113L653 527M1049 113L900 467M941 393L908 461M934 390L941 394" +
  "M817 183L819 178L1021 263L1019 268M911 243L1228 378M1066 459L1068 455L1168 496L1166 501M1294 142L1288 140L1247 239L1251 242M1328 113L1310 157M1401 113L1458 136";
const magenta =
  "M481 113L422 254L427 257M617 113L537 303L544 306M563 113L765 198L762 206M762 113L748 146L755 150M897 113L863 196" +
  "M1203 186L1207 180L1404 263L1401 271M1398 113L1369 182L1376 185M966 495L960 493L902 632L908 635";
const axes =
  "M388 113L351 214M350 225L1249 607M701 113L608 330M966 113L836 417M861 113L1367 327M1227 113L1423 196M1259 282L1143 553" +
  "M1396 340.500H1641M1445 205.500H1641M1580 449.500H1641M1239.500 206V825M1475.500 340V825";
const grids =
  "M366 205.500H744M366 340.500H744M366 449.500H745M491.500 206V825M618.500 206V825M474 188L508 222M600 188L635 222M600 323L636 357M600 431L636 467" +
  "M325 351L1092 676M534 459L582 440M760 553L806 536M1068 686L1115 667M1140 570L1029 825M832 430L684 777M605 345L460 682M1239.500 113V206M338 237L325 267";

/* axis bubbles: centre x, centre y, label, label centre x, label size */
const bubbles: [number, number, string, number, number][] = [
  [353, 206, "H", 353, 15],
  [353, 340, "G", 353, 15],
  [353, 449, "F", 353, 15],
  [385, 126, "1-1", 385, 15],
  [549, 126, "1-2", 549, 15],
  [338, 219, "1-A", 338, 15],
  [338, 237, "1-1", 338, 15],
  [892, 126, "1-5", 892, 15],
  [1240, 126, "3", 1240, 15],
  [1255, 126, "17-C", 1258, 12],
  [1453, 126, "1-6", 1453, 15],
  [454, 694, "1-3", 454, 15],
  [679, 789, "1-4", 679, 15],
];
/* dimensions and rebar notes: x, y, angle, size, text */
const marks: [number, number, number, number, string][] = [
  [427, 355, 23, 15, "3400"],
  [671, 457, 23, 15, "2900"],
  [937, 568, 23, 15, "4000"],
  [581, 288, -90, 15, "1600"],
  [581, 409, -90, 15, "1300"],
  [581, 667, -90, 15, "4800"],
  [723, 312, 23, 32, "LL4"],
  [781, 337, 23, 32, "(3)"],
  [841, 362, 23, 32, "300"],
  [884, 391, 23, 44, "*"],
  [907, 390, 23, 32, "560"],
  [709, 343, 23, 31, "C12"],
  [760, 361, 23, 20, "@"],
  [779, 371, 23, 32, "100"],
  [835, 395, 23, 32, "(2)"],
  [893, 420, 23, 30, "2C25"],
  [959, 448, 23, 30, "+"],
  [976, 455, 23, 30, "2C20"],
  [1045, 484, 23, 32, ";"],
  [1057, 489, 23, 30, "4C22"],
  [958, 446, 23, 30, "4C22"],
  [926, 514, 23, 30, "4C25"],
  [1158, 534, 23, 30, "2C25"],
  [1084, 558, 23, 30, "2C16"],
  [1151, 587, 23, 30, "+1C1"],
  [1094, 597, 23, 32, "300"],
  [1137, 631, 23, 44, "*"],
  [1160, 625, 23, 32, "360"],
];
const supports = ["611,323 583,344 617,358", "836,417 807,440 841,454", "1146,549 1117,571 1151,585", "1239,589 1211,611 1245,626"];

const Plan = () => (
  <Drawing viewBox="325 113 1316 712" preserveAspectRatio="xMidYMid slice" role="img" aria-label="梁平面图">
    <g shapeRendering="crispEdges" fill="none">
      {walls.map(([fill, points], k) => (
        <polygon key={k} fill={fill} points={points} />
      ))}
      <rect x="1232" y="820" width="8" height="5" fill="#a6b752" />
      <path d={grids} stroke={DARK} />
      <path d={outlines} stroke="#fff" />
      <path d={edges} stroke="#fff" strokeDasharray="2 1" />
      <path d={yellow} stroke={YEL} strokeWidth="1.600" />
      <path d="M1533 214V825M1467 683H1641" stroke={YEL} strokeWidth="2" />
      <path d={magenta} stroke={MAG} strokeWidth="1.600" />
      <path d="M1122 412V404H1484V412M1579 214H1571V825M1467 559V550H1641M1418 813H1410V825" stroke={MAG} strokeWidth="2" />
      <path d="M1458 113L1249 607M1504 113L1288 622" stroke={MAROON} />
      <path d="M703 357L694 379" stroke="#ff8000" strokeWidth="1.600" />
      <path d="M867 451h8v5zM1180 584l10 3v5z" fill="#ff8000" />
      {bubbles.map(([x, y], k) => (
        <circle key={k} cx={x} cy={y} r="12.500" stroke={DARK} />
      ))}
    </g>
    {bubbles.map(([, y, t, x, size], k) => (
      <Notes key={k}>
        <text x={x} y={y + 5} fontSize={size} textAnchor="middle" opacity=".85">
          {t}
        </text>
      </Notes>
    ))}
    {marks.map(([x, y, a, size, t], k) => (
      <Notes key={k}>
        <text transform={`translate(${x} ${y}) rotate(${a})`} fontSize={size}>
          {t}
        </text>
      </Notes>
    ))}
    <g shapeRendering="crispEdges" fill="none">
      {supports.map((p) => (
        <polygon key={p} points={p} fill={YEL} />
      ))}
      <path d={axes} stroke="#ff0000" />
      <path d="M600 338h8v8h-8zM1134 564h8v8h-8zM1227 604h8v8h-8z" fill="#0000ff" />
    </g>
  </Drawing>
);

/* ---------- application ---------- */
export default function App() {
  return (
    <Page>
      <Global />
      <BarRow $top>
        <Strip $lead={0}>
          <Tools
            items={[
              { i: "page", name: "新建", tight: true },
              { i: "open", name: "打开", menu: true },
              { i: "save", name: "保存" },
              "|",
              { i: "undo", name: "撤销", menu: true },
              { i: "redo", name: "重做", menu: true },
              { i: "define", t: "定义" },
              { i: "sigma", t: "汇总计算" },
              { i: "cloud", t: "云检查" },
              { i: "slab", t: "平齐板顶" },
              { i: "find", t: "查找图元" },
              { i: "glasses", t: "查看钢筋量" },
              { i: "batch", t: "批量选择" },
              { i: "rebar3d", t: "钢筋三维", off: true },
              { i: "lock", t: "锁定", off: true },
              { i: "unlock", t: "解锁", off: true },
              { i: "brush", t: "批量删除未使用构件" },
            ]}
          />
        </Strip>
        <Strip>
          <Picker w={62} value="二维" name="视图维度" icon="plane" />
          <Tools
            items={[
              { i: "cube", t: "俯视", menu: true },
              { i: "orbit", t: "动态观察" },
              { i: "local3d", t: "局部三维" },
              "|",
              { i: "full", t: "全屏" },
              { i: "zoom", t: "缩放", menu: true },
              { i: "pan", t: "平移", menu: true },
              { i: "spin", t: "屏幕旋转", menu: true },
              "|",
              { i: "floors", t: "选择楼层" },
              { i: "wire", t: "线框" },
            ]}
          />
        </Strip>
      </BarRow>
      <Body>
        <NavPanel />
        <PartPanel />
        <Center>
          <BarRow>
            <Strip>
              <Grip />
              <Tools
                items={[
                  { i: "brush", t: "删除" },
                  "|",
                  { i: "copy", t: "复制" },
                  { i: "mirror", t: "镜像" },
                  "|",
                  { i: "move", t: "移动" },
                  { i: "rotate", t: "旋转" },
                  "|",
                  { i: "extend", t: "延伸" },
                  { i: "trim", t: "修剪" },
                  "|",
                  { i: "cut", t: "打断" },
                  { i: "join", t: "合并" },
                  { i: "divide", t: "分割", off: true },
                  "|",
                  { i: "align", t: "对齐", off: true, menu: true },
                  { i: "offset", t: "偏移" },
                  { i: "stretch", t: "拉伸" },
                  "|",
                  { i: "clamp", t: "设置夹点", off: true },
                ]}
              />
            </Strip>
          </BarRow>
          <BarRow>
            <Strip>
              <Grip />
              <Picker w={56} value="第3层" name="楼层" />
              <Picker w={68} value="梁" name="构件大类" />
              <Picker w={68} value="梁" name="构件类型" />
              <Picker w={68} value="" name="构件" />
              <Picker w={70} value="分层1" name="分层" />
              <Split />
              <Tools
                items={[
                  { i: "attr", t: "属性", on: true },
                  { i: "editBar", t: "编辑钢筋" },
                  { i: "listBtn", t: "构件列表", on: true },
                  { i: "pick", t: "拾取构件", off: true },
                ]}
              />
            </Strip>
            <Strip>
              <Grip />
              <Tools
                items={[
                  { i: "twoPt", t: "两点" },
                  { i: "parallel", t: "平行" },
                  { i: "angle", t: "点角", menu: true },
                  { i: "arcAxis", t: "三点辅轴", menu: true },
                  { i: "brush", t: "删除辅轴" },
                  { i: "dim", t: "尺寸标注", menu: true },
                ]}
              />
            </Strip>
          </BarRow>
          <BarRow>
            <Strip $grow>
              <Grip />
              <Tools items={[{ i: "pointer", t: "选择", on: true }]} />
              <MenuButton type="button" aria-label="选择方式">
                <Caret />
              </MenuButton>
              <Tools
                items={[
                  "|",
                  { i: "line", t: "直线", off: true },
                  { i: "plusArc", t: "点加长度", off: true },
                  { i: "arc3", t: "三点画弧", off: true, menu: true },
                ]}
              />
              <Picker w={55} value="" name="画弧方式" boxed />
              <Tools
                items={[
                  { i: "rect", t: "矩形", off: true },
                  "|",
                  { i: "smart", t: "智能布置", off: true, menu: true },
                  "|",
                  { i: "modify", t: "修改梁段属性", off: true },
                  { i: "table", t: "梁平法表格", off: true, menu: true },
                  { i: "span", t: "重提梁跨", off: true, menu: true },
                  { i: "paint", t: "梁跨数据复制", off: true, menu: true },
                  { i: "detect", t: "批量识别梁支座", off: true },
                  { i: "apply", t: "应用到同名梁", off: true },
                  { i: "cap", t: "设置上部筋遇承台", off: true },
                ]}
              />
              <More type="button" aria-label="更多工具">»</More>
              <Grip />
              <EmptyTool />
            </Strip>
          </BarRow>
          <Canvas>
            <Plan />
          </Canvas>
        </Center>
        <PropertyPanel />
      </Body>
    </Page>
  );
}
